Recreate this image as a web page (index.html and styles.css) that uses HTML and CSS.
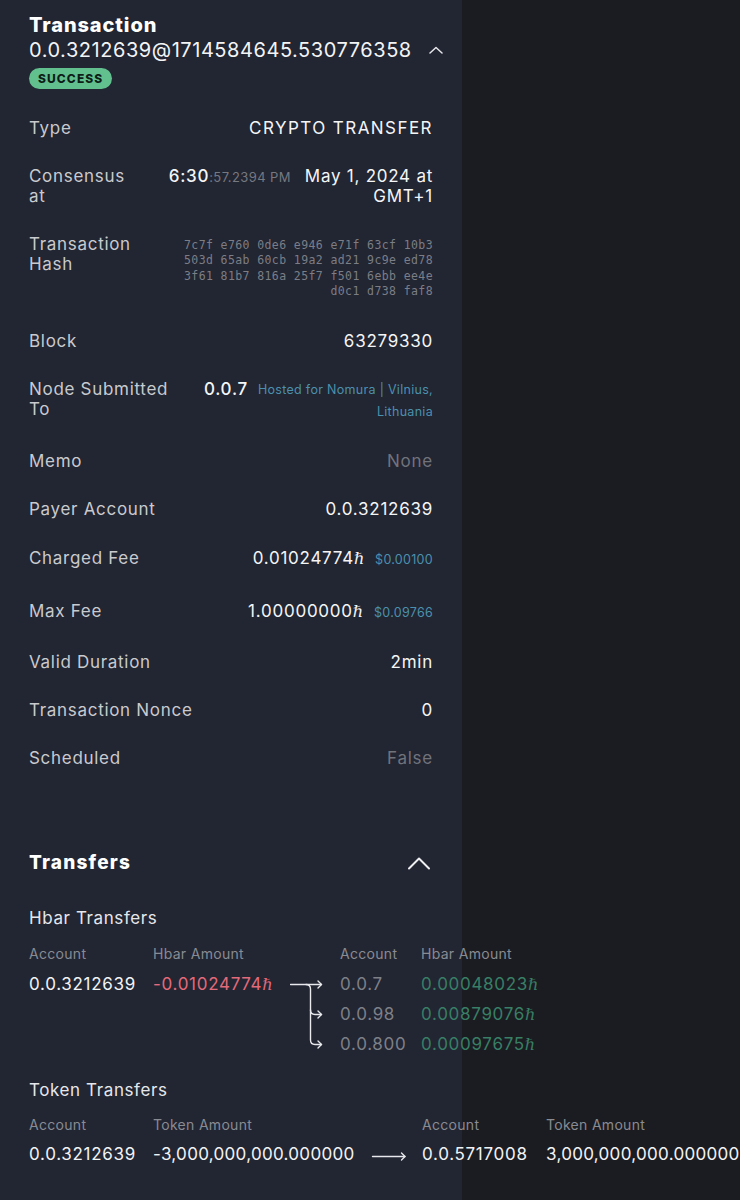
FILE: index.html
```html
<!DOCTYPE html>
<html lang="en">
<head>
<meta charset="utf-8">
<title>Transaction</title>
<link rel="stylesheet" href="styles.css">
</head>
<body>
<div class="panel">
  <header class="tx-head">
    <h1 class="title">Transaction</h1>
    <div class="txid-row">
      <span class="txid">0.0.3212639@1714584645.530776358</span>
      <svg class="chev-sm" width="14" height="8" viewBox="0 0 14 8"><path d="M1 7 L7 1.5 L13 7" fill="none" stroke="#e6e7ea" stroke-width="1.5" stroke-linecap="round" stroke-linejoin="round"/></svg>
    </div>
    <span class="badge">SUCCESS</span>
  </header>

  <div class="rows">
    <div class="row">
      <span class="label">Type</span>
      <span class="value caps">CRYPTO TRANSFER</span>
    </div>
    <div class="row">
      <span class="label w-consensus">Consensus at</span>
      <span class="value consensus">
        <span class="time"><span class="hm">6:30</span><span class="sec">:57.2394 PM</span></span>
        <span class="date"><span class="line">May 1, 2024 at</span><span class="line">GMT+1</span></span>
      </span>
    </div>
    <div class="row">
      <span class="label w-hash">Transaction Hash</span>
      <span class="value hash">
        <span class="line">7c7f e760 0de6 e946 e71f 63cf 10b3</span>
        <span class="line">503d 65ab 60cb 19a2 ad21 9c9e ed78</span>
        <span class="line">3f61 81b7 816a 25f7 f501 6ebb ee4e</span>
        <span class="line">d0c1 d738 faf8</span>
      </span>
    </div>
    <div class="row">
      <span class="label">Block</span>
      <span class="value">63279330</span>
    </div>
    <div class="row">
      <span class="label w-node">Node Submitted To</span>
      <span class="value node">
        <span class="node-id">0.0.7</span>
        <span class="node-desc"><span class="line">Hosted for Nomura | Vilnius,</span><span class="line">Lithuania</span></span>
      </span>
    </div>
    <div class="row">
      <span class="label">Memo</span>
      <span class="value muted">None</span>
    </div>
    <div class="row">
      <span class="label">Payer Account</span>
      <span class="value">0.0.3212639</span>
    </div>
    <div class="row fee">
      <span class="label">Charged Fee</span>
      <span class="value"><span class="amt">0.01024774<span class="hbar">ℏ</span></span><span class="usd">$0.00100</span></span>
    </div>
    <div class="row fee">
      <span class="label">Max Fee</span>
      <span class="value"><span class="amt">1.00000000<span class="hbar">ℏ</span></span><span class="usd">$0.09766</span></span>
    </div>
    <div class="row">
      <span class="label">Valid Duration</span>
      <span class="value">2min</span>
    </div>
    <div class="row">
      <span class="label">Transaction Nonce</span>
      <span class="value">0</span>
    </div>
    <div class="row">
      <span class="label">Scheduled</span>
      <span class="value muted">False</span>
    </div>
  </div>

  <section class="transfers">
    <div class="section-head">
      <h2 class="section-title">Transfers</h2>
      <svg class="chev-lg" width="24" height="14" viewBox="0 0 24 14"><path d="M2 12.5 L12 2.5 L22 12.5" fill="none" stroke="#eeeff1" stroke-width="2" stroke-linecap="round" stroke-linejoin="round"/></svg>
    </div>

    <h3 class="sub-title">Hbar Transfers</h3>
    <div class="tgrid hbar-grid">
      <span class="th">Account</span>
      <span class="th">Hbar Amount</span>
      <span class="th"></span>
      <span class="th">Account</span>
      <span class="th">Hbar Amount</span>

      <span class="td acct">0.0.3212639</span>
      <span class="td neg">-0.01024774<span class="hbar">ℏ</span></span>
      <svg class="branch" width="50" height="90" viewBox="0 0 50 90">
        <g fill="none" stroke="#e8e9ec" stroke-width="1.4" stroke-linecap="round" stroke-linejoin="round">
          <path d="M0.5 15.5 H31.5"/>
          <path d="M28 12 L31.5 15.5 L28 19"/>
          <path d="M16 15.5 Q20.5 15.5 20.5 20 V71 Q20.5 75.5 25 75.5 H31.5"/>
          <path d="M28 72 L31.5 75.5 L28 79"/>
          <path d="M20.5 41 Q20.5 45.5 25 45.5 H31.5"/>
          <path d="M28 42 L31.5 45.5 L28 49"/>
        </g>
      </svg>
      <span class="td dim">0.0.7</span>
      <span class="td pos">0.00048023<span class="hbar">ℏ</span></span>

      <span class="td dim r2">0.0.98</span>
      <span class="td pos r2b">0.00879076<span class="hbar">ℏ</span></span>

      <span class="td dim r3">0.0.800</span>
      <span class="td pos r3b">0.00097675<span class="hbar">ℏ</span></span>
    </div>

    <h3 class="sub-title token-title">Token Transfers</h3>
    <div class="tgrid token-grid">
      <span class="th">Account</span>
      <span class="th">Token Amount</span>
      <span class="th"></span>
      <span class="th">Account</span>
      <span class="th">Token Amount</span>

      <span class="td acct">0.0.3212639</span>
      <span class="td acct tok">-3,000,000,000.000000</span>
      <svg class="long-arrow" width="67" height="30" viewBox="0 0 67 30">
        <g fill="none" stroke="#e8e9ec" stroke-width="1.4" stroke-linecap="round" stroke-linejoin="round">
          <path d="M17.5 16.5 H50"/>
          <path d="M46.5 13 L50 16.5 L46.5 20"/>
        </g>
      </svg>
      <span class="td acct">0.0.5717008</span>
      <span class="td acct tok">3,000,000,000.000000</span>
    </div>
  </section>
</div>
</body>
</html>
```

FILE: styles.css
```css
html, body {
  margin: 0;
  padding: 0;
  overflow: hidden;
}

body {
  background: #1b1c21;
  font-family: Inter, "Noto Sans", "Liberation Sans", sans-serif;
  color: #f1f2f4;
  width: 740px;
  height: 1200px;
}

.panel {
  width: 462px;
  min-height: 1200px;
  box-sizing: border-box;
  padding: 14px 29px 0 29px;
  background: #222532;
}

/* header */
.title {
  margin: 0;
  font-size: 20px;
  font-weight: 800;
  line-height: 23px;
  letter-spacing: 0.9px;
  color: #ffffff;
}

.txid-row {
  display: flex;
  align-items: center;
  height: 26px;
}

.txid {
  font-size: 20px;
  line-height: 26px;
  letter-spacing: 0.55px;
  color: #f3f4f6;
  white-space: nowrap;
}

.chev-sm {
  margin-left: 17px;
  flex: none;
}

.badge {
  display: inline-block;
  margin-top: 5px;
  height: 21px;
  line-height: 21px;
  padding: 0 9px;
  border-radius: 11px;
  background: #62c08f;
  color: #0e1e17;
  font-size: 12px;
  font-weight: 800;
  letter-spacing: 1.1px;
}

/* detail rows */
.rows {
  margin-top: 15px;
}

.row {
  display: flex;
  justify-content: space-between;
  align-items: flex-start;
  gap: 12px;
  padding: 14px 0;
  font-size: 17px;
  line-height: 20px;
}

.row.fee {
  padding: 15.5px 0 15px 0;
}

.label {
  color: #c9cace;
  letter-spacing: 0.7px;
  flex: none;
}

.w-consensus { width: 100px; }
.w-hash { width: 110px; }
.w-node { width: 150px; }

.value {
  text-align: right;
  color: #f4f5f7;
  letter-spacing: 0.75px;
}

.value.caps {
  letter-spacing: 1.45px;
}

.value.muted {
  color: #71737b;
}

.consensus {
  display: flex;
  align-items: flex-start;
  gap: 14px;
}

.time {
  white-space: nowrap;
}

.hm {
  font-size: 17px;
  font-weight: 500;
}

.sec {
  font-size: 13px;
  color: #767880;
  letter-spacing: 0.4px;
}

.date {
  display: flex;
  flex-direction: column;
  align-items: flex-end;
  white-space: nowrap;
}

.line {
  display: block;
  white-space: pre;
}

.hash {
  font-family: "DejaVu Sans Mono", "Liberation Mono", monospace;
  font-size: 11.5px;
  line-height: 15.4px;
  color: #7c7e86;
  letter-spacing: 0.4px;
  padding-top: 4px;
  margin-bottom: 3px;
}

.node {
  display: flex;
  align-items: flex-start;
  gap: 10px;
}

.node-id {
  font-weight: 500;
  white-space: nowrap;
}

.node-desc {
  display: flex;
  flex-direction: column;
  align-items: flex-end;
  font-size: 12.5px;
  line-height: 22px;
  color: #4b91ad;
  letter-spacing: 0.3px;
  text-align: right;
}

.amt {
  white-space: nowrap;
}

.hbar {
  font-family: "DejaVu Serif", "Liberation Serif", serif;
  font-style: italic;
  font-size: 0.95em;
  line-height: 0;
}

.usd {
  margin-left: 10px;
  font-size: 12.5px;
  color: #4b91ad;
  letter-spacing: 0.3px;
}

/* transfers */
.transfers {
  margin-top: 69px;
}

.section-head {
  display: flex;
  align-items: center;
  justify-content: space-between;
  height: 24px;
}

.section-title {
  margin: 0;
  font-size: 19px;
  font-weight: 800;
  letter-spacing: 1.2px;
  color: #ffffff;
}

.chev-lg {
  margin-right: 2px;
}

.sub-title {
  margin: 33px 0 0 0;
  font-size: 17px;
  font-weight: 400;
  line-height: 20px;
  letter-spacing: 0.6px;
  color: #e6e7ea;
}

.token-title {
  margin-top: 21px;
}

.tgrid {
  display: grid;
  grid-auto-rows: 30px;
  align-items: center;
  margin-top: 10px;
  width: max-content;
}

.hbar-grid {
  grid-template-columns: 124px 137px 50px 81px auto;
  grid-template-rows: 31px 30px 30px 30px;
}

.token-grid {
  grid-template-columns: 124px 202px 67px 124px auto;
  grid-template-rows: 30px 29px;
}

.th {
  font-size: 14px;
  color: #898b92;
  letter-spacing: 0.3px;
}

.td {
  font-size: 17px;
  letter-spacing: 0.7px;
  white-space: nowrap;
}

.td.tok {
  letter-spacing: 0.3px;
}

.acct { color: #f2f3f5; }
.neg { color: #e26a7a; }
.dim { color: #7e8088; }
.pos { color: #387f66; }

.branch {
  grid-column: 3;
  grid-row: 2 / span 3;
  align-self: start;
}

.r2 { grid-column: 4; grid-row: 3; }
.r2b { grid-column: 5; grid-row: 3; }
.r3 { grid-column: 4; grid-row: 4; }
.r3b { grid-column: 5; grid-row: 4; }

.long-arrow {
  align-self: start;
}
```
